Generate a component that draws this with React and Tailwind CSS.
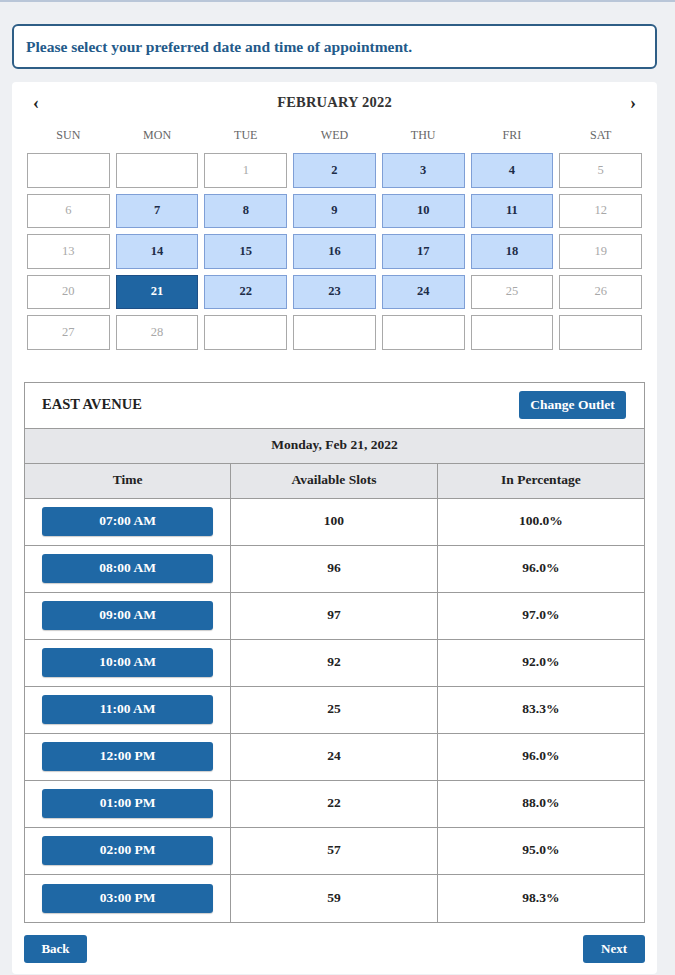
const DAY_NAMES = ["SUN", "MON", "TUE", "WED", "THU", "FRI", "SAT"];

// February 2022 starts on a Tuesday
const CELLS = [null, null, ...Array.from({ length: 28 }, (_, i) => i + 1), null, null, null, null, null];

const OPEN_DAYS = [2, 3, 4, 7, 8, 9, 10, 11, 14, 15, 16, 17, 18, 22, 23, 24];
const SELECTED_DAY = 21;

const SLOTS = [
  { time: "07:00 AM", slots: "100", pct: "100.0%" },
  { time: "08:00 AM", slots: "96", pct: "96.0%" },
  { time: "09:00 AM", slots: "97", pct: "97.0%" },
  { time: "10:00 AM", slots: "92", pct: "92.0%" },
  { time: "11:00 AM", slots: "25", pct: "83.3%" },
  { time: "12:00 PM", slots: "24", pct: "96.0%" },
  { time: "01:00 PM", slots: "22", pct: "88.0%" },
  { time: "02:00 PM", slots: "57", pct: "95.0%" },
  { time: "03:00 PM", slots: "59", pct: "98.3%" },
];

const serif = { fontFamily: '"Liberation Serif", "DejaVu Serif", serif' };

const DayCell = ({ day }) => {
  if (day === SELECTED_DAY) {
    return (
      <div className="h-[34.5px] border border-[#1d4f86] bg-[#1f65a2] flex items-center justify-center text-[12.5px] font-bold text-white">
        {day}
      </div>
    );
  }
  if (OPEN_DAYS.includes(day)) {
    return (
      <div className="h-[34.5px] border border-[#7f9fd6] bg-[#c4dcfb] flex items-center justify-center text-[12.5px] font-bold text-[#1d2c48]">
        {day}
      </div>
    );
  }
  return (
    <div className="h-[34.5px] border border-[#a9a9a9] bg-white flex items-center justify-center text-[12.5px] text-[#a8a8a8]">
      {day}
    </div>
  );
};

const Calendar = () => (
  <div className="px-[15px] pt-[12px]">
    <div className="flex items-center justify-between px-[6px] h-[18px]">
      <span className="text-[18px] font-bold text-[#222] leading-none">‹</span>
      <span className="text-[14.5px] font-bold text-[#333] tracking-[0.2px]">FEBRUARY 2022</span>
      <span className="text-[18px] font-bold text-[#222] leading-none">›</span>
    </div>
    <div className="grid grid-cols-7 gap-x-[6px] mt-[14px] mb-[9px]">
      {DAY_NAMES.map((d) => (
        <div key={d} className="text-center text-[12px] text-[#666]">
          {d}
        </div>
      ))}
    </div>
    <div className="grid grid-cols-7 gap-x-[6px] gap-y-[6px]">
      {CELLS.map((day, i) => (
        <DayCell key={i} day={day} />
      ))}
    </div>
  </div>
);

const SlotTable = () => (
  <div className="mx-[12px] mt-[32px] border border-[#9b9b9b]">
    <div className="h-[46px] flex items-center justify-between pl-[17px] pr-[18px] border-b border-[#9b9b9b]">
      <span className="text-[14.5px] font-bold text-[#222]">EAST AVENUE</span>
      <button className="w-[107px] h-[28px] rounded-[3px] bg-[#1f68a5] text-white text-[13.5px] font-bold">
        Change Outlet
      </button>
    </div>
    <div className="h-[35px] flex items-center justify-center bg-[#e6e7ea] border-b border-[#9b9b9b] text-[13.5px] font-bold text-[#222]">
      Monday, Feb 21, 2022
    </div>
    <div className="grid grid-cols-3 h-[35px] bg-[#e6e7ea] border-b border-[#9b9b9b] text-[13.5px] font-bold text-[#222]">
      <div className="flex items-center justify-center border-r border-[#9b9b9b]">Time</div>
      <div className="flex items-center justify-center border-r border-[#9b9b9b]">Available Slots</div>
      <div className="flex items-center justify-center">In Percentage</div>
    </div>
    {SLOTS.map((s, i) => (
      <div
        key={s.time}
        className={`grid grid-cols-3 h-[47px] text-[13.5px] font-bold text-[#222] ${i < SLOTS.length - 1 ? "border-b border-[#9b9b9b]" : ""}`}
      >
        <div className="flex items-center pl-[17px] pr-[17px] border-r border-[#9b9b9b]">
          <button className="w-full h-[29px] rounded-[3px] bg-[#1f68a5] text-white text-[13.5px] font-bold shadow-[0_1px_1px_rgba(0,0,0,0.2)]">
            {s.time}
          </button>
        </div>
        <div className="flex items-center justify-center border-r border-[#9b9b9b]">{s.slots}</div>
        <div className="flex items-center justify-center">{s.pct}</div>
      </div>
    ))}
  </div>
);

export default function App() {
  return (
    <div className="min-h-[975px] bg-[#eef0f3] border-t-2 border-[#b9c6d8] pt-[22px] pb-[3px]" style={serif}>
      <div className="ml-[12px] mr-[18px]">
        <div className="h-[45px] flex items-center px-[12px] bg-white border-2 border-[#2e5e86] rounded-[6px]">
          <span className="text-[15.5px] font-bold text-[#235a8a]">
            Please select your preferred date and time of appointment.
          </span>
        </div>
        <div className="mt-[13px] bg-white rounded-[4px] pb-[11px]">
          <Calendar />
          <SlotTable />
          <div className="flex justify-between mx-[12px] mt-[12px]">
            <button className="w-[63px] h-[28px] rounded-[3px] bg-[#1f68a5] text-white text-[13px] font-bold">Back</button>
            <button className="w-[62px] h-[28px] rounded-[3px] bg-[#1f68a5] text-white text-[13px] font-bold">Next</button>
          </div>
        </div>
      </div>
    </div>
  );
}
